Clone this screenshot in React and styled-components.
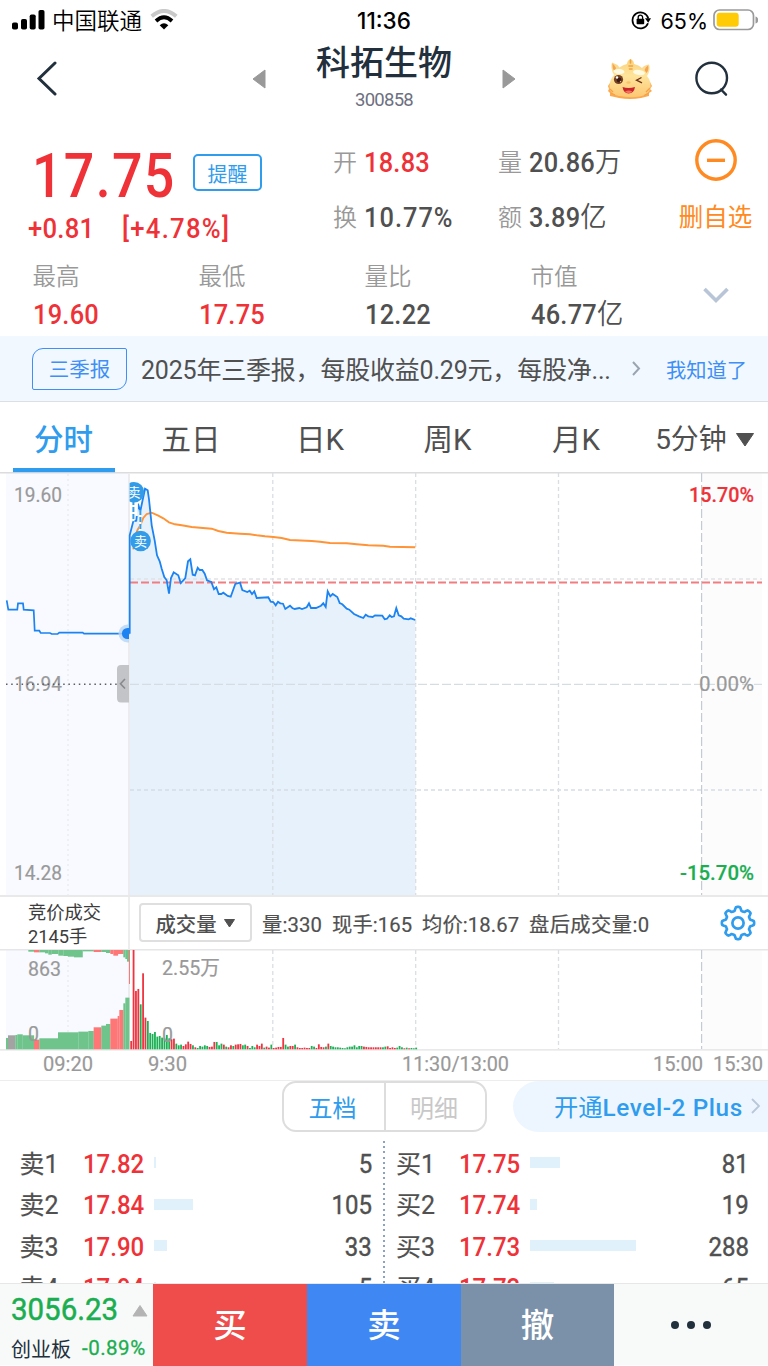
import React from 'react';
import styled, { createGlobalStyle } from 'styled-components';

const colors = {
  red: '#ee3238',
  green: '#1aae50',
  blue: '#2f9ced',
  link: '#3f8ff5',
  text: '#505050',
  muted: '#999999',
  dark: '#22303d',
  orange: '#ff8a22',
};

const GlobalStyle = createGlobalStyle`
  * {
    box-sizing: border-box;
  }
  body {
    margin: 0;
    background: #fff;
    font-family: Roboto, "Noto Sans CJK SC", sans-serif;
    color: ${colors.text};
  }
`;

const Page = styled.div`
  width: 768px;
  height: 1366px;
  overflow: hidden;
  display: flex;
  flex-direction: column;
  background: #fff;
`;

/* status bar */

const StatusBar = styled.div`
  height: 40px;
  flex: none;
  display: grid;
  grid-template-columns: 1fr auto 1fr;
  align-items: center;
  padding: 0 9px 5px 12px;
  color: #000;
  font-family: Inter, "Noto Sans CJK SC", sans-serif;
  font-size: 22px;
  line-height: 36px;
`;

const StatusGroup = styled.div`
  display: flex;
  align-items: center;
  justify-content: ${({ $end }) => ($end ? 'flex-end' : 'flex-start')};
`;

const Carrier = styled.span`
  font-size: 22.5px;
  font-weight: 350;
  margin: 2px 8px 0 7px;
`;

const Clock = styled.span`
  font-weight: 500;
  font-size: 22.5px;
  margin: 3px 3px 0 0;
`;

const Percent = styled.span`
  font-size: 21.5px;
  margin: 3px 5px 0 9px;
`;

/* header */

const Header = styled.header`
  height: 90px;
  flex: none;
  display: flex;
  align-items: flex-start;
  color: ${colors.dark};
`;

const HeaderSide = styled.div`
  width: ${({ $width }) => $width}px;
  height: 77px;
  display: flex;
  align-items: center;
  padding-left: ${({ $pad }) => $pad}px;
  gap: ${({ $gap }) => $gap || 0}px;
`;

const TitleBlock = styled.div`
  width: 236px;
  text-align: center;
`;

const Title = styled.h1`
  margin: 0;
  padding-top: 1px;
  font-size: 34px;
  font-weight: 500;
  line-height: 44px;
`;

const Code = styled.div`
  margin-top: 4px;
  font-size: 18.5px;
  line-height: 22px;
  letter-spacing: -0.04em;
  color: #6d7080;
`;

/* quote */

const Quote = styled.section`
  height: 206px;
  flex: none;
`;

const QuoteTop = styled.div`
  display: grid;
  grid-template-columns: 333px 165px 168px 1fr;
  height: 130px;
`;

const PriceLine = styled.div`
  height: 72px;
  padding: 10px 0 0 32px;
  display: flex;
  align-items: flex-start;
`;

const Price = styled.div`
  width: 161px;
  font-size: 61px;
  font-weight: 500;
  line-height: 73px;
  letter-spacing: 0.025em;
  transform: scaleX(0.88);
  transform-origin: left;
  color: ${colors.red};
`;

const Remind = styled.button`
  width: 69px;
  height: 37px;
  flex: none;
  margin: 14px 0 0;
  padding: 4px 0 0;
  border: 2px solid ${colors.blue};
  border-radius: 5px;
  background: #fff;
  color: ${colors.blue};
  font-family: inherit;
  font-size: 20px;
  line-height: 30px;
`;

const ChangeLine = styled.div`
  display: flex;
  gap: 24px;
  padding: 10px 0 0 28px;
  font-size: 27px;
  font-weight: 500;
  line-height: 34px;
  letter-spacing: 0.01em;
  color: ${colors.red};

  span {
    transform: scaleX(0.95);
    transform-origin: left;
  }
  span:last-child {
    letter-spacing: 0.05em;
  }
`;

const PairColumn = styled.div`
  display: flex;
  flex-direction: column;
  gap: 19px;
  padding-top: 15px;
`;

const Pair = styled.div`
  display: flex;
  gap: 7px;
  font-size: 27px;
  line-height: 36px;
  white-space: nowrap;
`;

const Label = styled.span`
  font-size: 24px;
  font-weight: 350;
  color: ${colors.muted};
`;

// figures are set a little condensed
const Value = styled.span`
  letter-spacing: ${({ $wide }) => ($wide ? 0.04 : 0.01)}em;
  font-weight: 500;
  transform: scaleX(0.94);
  transform-origin: left;
  color: ${({ $up }) => ($up ? colors.red : colors.text)};
`;

const Unit = styled.span`
  font-weight: 350;
  font-size: 28px;
  line-height: 1;
`;

const Remove = styled.div`
  display: flex;
  flex-direction: column;
  align-items: center;
  padding: 9px 3px 0 0;
  color: ${colors.orange};
  font-size: 24.5px;
  line-height: 34px;

  span {
    margin-top: 20px;
  }
`;

const Stats = styled.div`
  display: grid;
  grid-template-columns: 166px 166px 166px 172px 1fr;
  padding-left: 32.5px;
`;

const Stat = styled.div`
  display: flex;
  flex-direction: column;
  font-size: 27px;
  line-height: 40px;

  ${Label} {
    line-height: 35px;
    font-size: 23.5px;
  }
`;

const Expand = styled.div`
  padding-top: 27px;
`;

/* report notice */

const Notice = styled.div`
  height: 66px;
  flex: none;
  display: flex;
  align-items: center;
  padding: 0 0 0 32px;
  background: #f1f8ff;
  border-bottom: 1px solid #dcdfe3;
`;

const NoticeTag = styled.div`
  width: 95px;
  height: 42px;
  flex: none;
  border: 1px solid ${colors.link};
  border-radius: 11px 2px 11px 2px;
  color: ${colors.link};
  font-size: 20.5px;
  line-height: 43px;
  text-align: center;
`;

const NoticeText = styled.div`
  width: 489px;
  flex: none;
  margin: 4px 0 0 14px;
  font-size: 25px;
  line-height: 36px;
  letter-spacing: -0.2px;
  white-space: nowrap;
`;

const NoticeDismiss = styled.div`
  margin-left: 24px;
  color: ${colors.link};
  font-size: 20.3px;
  white-space: nowrap;
`;

/* period tabs */

const Tabs = styled.nav`
  height: 70px;
  flex: none;
  display: grid;
  grid-template-columns: 127px 128px 130px 125px 132px 126px;
`;

const Tab = styled.div`
  display: flex;
  justify-content: center;
  align-items: center;
  gap: 8px;
  padding-top: 5px;
  font-size: ${({ $small }) => ($small ? 28 : 29.5)}px;
  line-height: 40px;
  font-weight: ${({ $active }) => ($active ? 500 : 400)};
  color: ${({ $active }) => ($active ? colors.blue : colors.text)};
  background: ${({ $active }) =>
    $active ? `linear-gradient(${colors.blue}, ${colors.blue}) 13px 66px / 102px 4px no-repeat` : 'none'};
`;

const Chart = styled.svg`
  display: block;
  flex: none;
  font-family: Roboto, "Noto Sans CJK SC", sans-serif;
`;

/* volume toolbar */

const Indicator = styled.div`
  height: 53px;
  flex: none;
  display: flex;
  border-top: 2px solid #e9e9ea;
`;

const Auction = styled.div`
  width: 130px;
  padding: 4px 0 0 28px;
  border-right: 2px solid #ededee;
  font-size: 18.3px;
  line-height: 24px;
  color: #3c3c3c;
  white-space: nowrap;
`;

const IndicatorSelect = styled.div`
  width: 113px;
  height: 39px;
  margin: 6px 0 0 9px;
  border: 2px solid #dfdfdf;
  border-radius: 4px;
  display: flex;
  align-items: center;
  justify-content: center;
  gap: 6px;
  font-size: 20.4px;
  font-weight: 500;
`;

const Readings = styled.div`
  display: flex;
  width: 468px;
  padding: 13px 0 0 10px;
  font-size: 20.3px;
  line-height: 30px;
  white-space: nowrap;
`;

const Reading = styled.span`
  width: ${({ $width }) => $width}px;
  letter-spacing: 0.1px;
  -webkit-text-stroke: 0.2px ${colors.text};

  &:last-child {
    letter-spacing: 0.4px;
  }
`;

const Settings = styled.div`
  padding-top: 8px;
`;

/* order book */

const Depth = styled.section`
  height: 203px;
  flex: none;
  overflow: hidden;
  border-top: 1px solid #ededee;
`;

const DepthHeader = styled.div`
  display: flex;
  height: 51px;
  padding-left: 282px;
`;

const Switch = styled.div`
  width: 205px;
  display: flex;
  border: 2px solid #dddddd;
  border-radius: 14px;
`;

const SwitchItem = styled.div`
  flex: ${({ $active }) => ($active ? '0 0 100px' : 1)};
  padding-right: 3px;
  text-align: center;
  font-size: 24px;
  line-height: 52px;
  color: ${({ $active }) => ($active ? colors.blue : '#c8c8c8')};

  & + & {
    border-left: 2px solid #dddddd;
  }
`;

const LevelTwo = styled.div`
  flex: 1;
  display: flex;
  align-items: center;
  gap: 8px;
  margin-left: 26px;
  padding: 0 0 2px 41px;
  border-radius: 26px 0 0 26px;
  background: #edf6ff;
  color: ${colors.blue};
  font-size: 24.3px;
  white-space: nowrap;

  b {
    font-weight: 500;
    letter-spacing: 0.025em;
  }
`;

const Book = styled.div`
  display: grid;
  grid-template-columns: 383px 2px 383px;
  padding-top: 11.5px;
`;

const BookDivider = styled.div`
  margin-top: -3px;
  background: repeating-linear-gradient(#8ba3bf 0 2px, #fff 2px 5.2px);
`;

const Side = styled.div`
  padding: ${({ $right }) => ($right ? '0 19px 0 11px' : '0 11px 0 19.5px')};
`;

const Order = styled.div`
  display: grid;
  grid-template-columns: ${({ $right }) => ($right ? '63px 71px' : '63px 71.5px')} 1fr auto;
  height: 41.5px;
  line-height: 41.5px;
  font-size: 25.5px;

  ${Value} {
    letter-spacing: 0;
  }
`;

const OrderName = styled.span`
  font-size: 25px;
  white-space: nowrap;
  -webkit-text-stroke: 0.2px ${colors.text};
`;

const Amount = styled.span`
  transform: scaleX(0.94);
  transform-origin: right;
  -webkit-text-stroke: 0.4px ${colors.text};
`;

const VolumeBar = styled.span`
  height: 11px;
  margin-top: 13.5px;
  background: #e0f1fc;
`;

/* bottom bar */

const Footer = styled.footer`
  height: 83px;
  flex: none;
  display: grid;
  grid-template-columns: 153px 154px 154px 153px 1fr;
  background: #f8faf9;
  border-top: 1px solid #e6e8e8;
  border-bottom: 1px solid #fff;
`;

const Index = styled.div`
  padding: 7px 0 0 11px;
`;

const IndexRow = styled.div`
  display: flex;
  align-items: center;
  white-space: nowrap;
  color: ${colors.green};
  height: 38px;
`;

const IndexValue = styled.span`
  width: 121px;
  font-size: 31px;
  line-height: 38px;
  transform: scaleX(0.95);
  transform-origin: left;
  -webkit-text-stroke: 0.5px ${colors.green};
`;

const IndexName = styled.span`
  width: 71px;
  font-size: 20px;
  color: ${colors.dark};
`;

const IndexChange = styled.span`
  font-size: 20.5px;
  letter-spacing: 0.5px;
  -webkit-text-stroke: 0.3px ${colors.green};
`;

const Trade = styled.button`
  border: 0;
  margin: 0;
  padding: 0 0 6px;
  background: ${({ $color }) => $color};
  color: #fff;
  font-family: inherit;
  font-size: 33.5px;
  font-weight: 500;
`;

const More = styled.div`
  display: flex;
  align-items: center;
  justify-content: center;
  padding-bottom: 1px;
  gap: 8px;

  i {
    width: 8px;
    height: 8px;
    border-radius: 50%;
    background: ${colors.dark};
  }
`;

// chart series are kept in 3x device pixels
const toPoints = (series) => series.map(([x, y]) => `${(x / 3).toFixed(1)},${(y / 3).toFixed(1)}`).join(' ');

const auctionLine = [
  [20, 385], [25, 413], [52, 413], [54, 394], [69, 394], [71, 413], [101, 415], [104, 476], [118, 476],
  [122, 483], [150, 483], [155, 486], [173, 486], [178, 482], [248, 482], [252, 485], [388, 485],
];

const priceLine = [
  [389, 485], [389, 190], [400, 148], [409, 146], [414, 95], [421, 118], [435, 50], [443, 55], [447, 82],
  [455, 160], [464, 206], [471, 250], [479, 268], [485, 290], [493, 315], [500, 325], [507, 365], [513, 318],
  [521, 301], [535, 310], [542, 333], [550, 325], [556, 318], [564, 268], [571, 262], [578, 308], [585, 310],
  [593, 287], [599, 294], [607, 294], [614, 305], [621, 325], [634, 330], [642, 352], [649, 346], [656, 366],
  [664, 366], [670, 362], [683, 372], [692, 374], [706, 336], [720, 332], [727, 354], [742, 360], [749, 356],
  [756, 366], [763, 358], [770, 378], [805, 376], [812, 389], [820, 390], [827, 400], [834, 389], [841, 394],
  [849, 395], [856, 411], [870, 401], [877, 408], [884, 411], [898, 408], [906, 411], [920, 406], [927, 394],
  [933, 408], [948, 408], [963, 401], [970, 394], [977, 405], [983, 358], [991, 373], [998, 366], [1012, 375],
  [1019, 393], [1027, 397], [1040, 410], [1048, 413], [1062, 426], [1077, 433], [1090, 438], [1097, 428],
  [1105, 433], [1118, 435], [1125, 430], [1147, 431], [1154, 442], [1161, 440], [1169, 430], [1175, 435],
  [1182, 433], [1189, 408], [1196, 430], [1204, 433], [1211, 440], [1226, 442], [1232, 439], [1246, 444],
];

const averageLine = [
  [400, 232], [404, 198], [412, 175], [421, 160], [430, 138], [440, 126], [455, 122], [475, 131], [490, 139],
  [507, 151], [525, 157], [545, 160], [575, 165], [600, 167], [635, 170], [655, 177], [680, 182], [720, 185],
  [750, 187], [770, 190], [795, 193], [820, 195], [845, 198], [870, 204], [935, 207], [960, 209], [990, 213],
  [1040, 214], [1070, 217], [1105, 220], [1150, 221], [1170, 224], [1246, 226],
];

// [from, to, height, colour]
const auctionTop = [
  [85, 102, 5, 'g'], [102, 118, 7, 'r'], [118, 135, 7, 'g'], [135, 145, 10, 'g'], [145, 155, 14, 'g'],
  [155, 175, 12, 'g'], [175, 190, 17, 'g'], [190, 204, 18, 'g'], [204, 222, 20, 'g'], [222, 248, 22, 'g'],
  [248, 281, 4, 'g'], [281, 304, 6, 'r'], [304, 318, 6, 'g'], [318, 331, 9, 'g'], [331, 340, 12, 'r'],
  [340, 354, 17, 'r'], [354, 370, 12, 'r'], [370, 376, 22, 'g'], [376, 381, 27, 'g'], [381, 388, 35, 'g'],
];

const auctionBottom = [
  [18, 24, 34, 'g'], [24, 46, 42, 'x'], [46, 52, 43, 'g'], [52, 68, 45, 'g'], [68, 102, 42, 'g'],
  [102, 118, 29, 'r'], [118, 174, 33, 'g'], [174, 235, 51, 'g'], [235, 265, 53, 'g'], [265, 281, 55, 'g'],
  [281, 304, 66, 'r'], [304, 318, 71, 'g'], [318, 331, 76, 'g'], [331, 353, 92, 'r'], [353, 358, 100, 'r'],
  [358, 370, 118, 'r'], [370, 376, 138, 'g'], [376, 388, 155, 'g'],
];

const barFill = { g: '#6ec48a', r: '#ff7676', x: '#a3a3a3' };

const volumes = [
  25, 298, 175, 181, 135, 228, 95, 85, 49, 46, 52, 38, 40, 35, 33, 43, 33, 30, 32, 17, 12, 14, 10, 15, 23, 16, 12, 6,
  4, 10, 8, 12, 10, 7, 8, 22, 22, 12, 17, 14, 8, 6, 12, 10, 14, 15, 16, 12, 14, 10, 4, 10, 6, 14, 10, 17, 5, 8, 5, 14,
  4, 5, 7, 7, 34, 14, 8, 10, 10, 14, 6, 4, 4, 5, 4, 4, 10, 8, 4, 15, 7, 6, 8, 17, 10, 8, 6, 6, 5, 4, 3, 6, 8, 8, 12,
  6, 10, 10, 8, 7, 6, 6, 6, 6, 6, 6, 6, 8, 9, 4, 6, 4, 5, 10, 6, 3, 5, 3, 4, 3, 5,
];
const volumeSides =
  'rrrrgrrggggggggggrrgggrrrrgrgggggrrrgggrgrrgrrrggrgggrrrgrrgrrrrrggrrgrrrrrrggrrrrgrggggggggggggggrrrrrrrrggrrrrgggrgrg';

const dash = { stroke: '#dfe2e5', strokeWidth: 1.3, strokeDasharray: '4 3' };

const ChartText = ({ x, y, w, fill = colors.muted, size = 20.5, bold, children }) => (
  <text
    x={x}
    y={y}
    fill={fill}
    fontSize={size}
    fontWeight={bold ? 500 : 400}
    textLength={w}
    lengthAdjust="spacingAndGlyphs"
    stroke={fill}
    strokeWidth=".2"
  >
    {children}
  </text>
);

const SellPin = ({ x, y }) => (
  <g>
    <circle cx={x} cy={y} r="10.3" fill="#329ce8" />
    <text x={x} y={y + 5} fontSize="13" fill="#fff" textAnchor="middle">
      卖
    </text>
  </g>
);

const PriceChart = () => (
  <Chart width="768" height="423" viewBox="0 0 768 423">
    <clipPath id="session">
      <rect x="129.6" y="0" width="640" height="423" />
    </clipPath>
    <clipPath id="preopen">
      <rect x="0" y="0" width="129" height="423" />
    </clipPath>
    <rect x="6" y="0" width="123" height="423" fill="#f8faff" />
    <rect x="702" y="0" width="60" height="423" fill="#fcfcfd" />
    <polygon points={`${toPoints(priceLine)} 415.5,423 129.7,423`} fill="#e6f1fc" />
    <path d="M0 .75H768" stroke="#dcdcdd" strokeWidth="1.5" />
    <path d="M13 0H115" stroke="#9fd0f6" strokeWidth="1" />
    <path d="M68 2V423" stroke="#e4e6ea" strokeDasharray="2 3" />
    <path d="M272.8 1V423M415.7 1V423M558.5 1V423" {...dash} stroke="#d9dee2" />
    <path d="M701.6 1V423" stroke="#c3ccd4" strokeWidth="1.2" strokeDasharray="9 3" />
    <path d="M130 107H762" {...dash} />
    <path d="M130 212.3H762" stroke="#d5dde3" strokeWidth="1.2" strokeDasharray="9 3" />
    <path d="M130 318H762" {...dash} stroke="#d5dde3" />
    <path d="M130 110.5H762" stroke="#f27d80" strokeWidth="1.8" strokeDasharray="8 3" />
    <path d="M129 1V423" stroke="#ececee" strokeWidth="2" />

    <ChartText x="14" y="30" w="48">19.60</ChartText>
    <ChartText x="14" y="219" w="48">16.94</ChartText>
    <ChartText x="14" y="408" w="48">14.28</ChartText>
    <path d="M6 212.3H122" stroke="#5c5c66" strokeWidth="1.5" strokeDasharray="1.5 3.7" />

    <polyline points={toPoints(averageLine)} fill="none" stroke="#ff9336" strokeWidth="1.9" />
    <polyline points={toPoints(priceLine)} fill="none" stroke="#1b83f2" strokeWidth="1.8" />
    <polyline points={toPoints(auctionLine)} fill="none" stroke="#1b83f2" strokeWidth="1.7" />
    <g clipPath="url(#session)">
      <path d="M133.4 28V50M136.8 28V44M140.4 38V60" stroke="#fff" strokeWidth="2.2" />
      <path d="M133.4 28V50M140.4 38V60" stroke="#329ce8" strokeWidth="2" strokeDasharray="5 2" />
      <SellPin x={134} y={20.3} />
      <SellPin x={140.6} y={69} />
    </g>
    <g clipPath="url(#preopen)">
      <circle cx="127.5" cy="161.5" r="9" fill="#b5d4f6" opacity=".8" />
      <circle cx="127.5" cy="161.5" r="5.6" fill="#1b83f2" />
    </g>
    <path d="M129 193H121Q117 193 117 197V226Q117 230.6 121 230.6H129Z" fill="#c3c4c7" />
    <path d="M125 207L120.5 211.7L125 216.5" fill="none" stroke="#88898c" strokeWidth="1.6" />

    <ChartText x="689" y="30" w="65" fill={colors.red} bold>15.70%</ChartText>
    <ChartText x="699" y="219" w="55">0.00%</ChartText>
    <ChartText x="680" y="408" w="74" fill={colors.green} bold>-15.70%</ChartText>
  </Chart>
);

const VolumeChart = () => (
  <Chart width="768" height="132" viewBox="0 0 768 132">
    <rect x="6" y="2" width="123" height="99.5" fill="#f8faff" />
    <rect x="702" y="2" width="60" height="99.5" fill="#fcfcfd" />
    <path d="M0 1.8H768" stroke="#e6e6e8" strokeWidth="1.5" />
    <path d="M68 2V101" stroke="#e4e6ea" strokeDasharray="2 3" />
    <path d="M272.8 2V101M415.7 2V101M558.5 2V101" {...dash} stroke="#dadfe3" />
    <path d="M701.6 2V101" stroke="#c3ccd4" strokeWidth="1.2" strokeDasharray="9 3" />
    <path d="M129 0V101" stroke="#ececee" strokeWidth="2" />
    <path d="M0 101.8H768" stroke="#e2e2e4" strokeWidth="1.2" />
    {auctionTop.map(([from, to, h, c]) => (
      <rect key={from} x={from / 3} y="2" width={(to - from) / 3 + 0.1} height={h / 3} fill={barFill[c]} />
    ))}
    {auctionBottom.map(([from, to, h, c]) => (
      <rect key={from} x={from / 3} y={101.3 - h / 3} width={(to - from) / 3 + 0.1} height={h / 3} fill={barFill[c]} />
    ))}
    <path d="M129.5 2V36" stroke="#ff7676" strokeWidth="1" />
    {volumes.map((h, i) => (
      <rect
        key={i}
        x={130.3 + i * 2.375}
        y={101.3 - h / 3}
        width="1.8"
        height={h / 3}
        fill={volumeSides[i] === 'r' ? '#ef3340' : '#1cb055'}
      />
    ))}
    <ChartText x="28" y="28" w="33">863</ChartText>
    <ChartText x="28" y="93" w="11">0</ChartText>
    <ChartText x="162" y="27" w="58">2.55万</ChartText>
    <ChartText x="162" y="94" w="11">0</ChartText>
    <ChartText x="43" y="123" w="50">09:20</ChartText>
    <ChartText x="148" y="123" w="39">9:30</ChartText>
    <ChartText x="402" y="123" w="107">11:30/13:00</ChartText>
    <ChartText x="653" y="123" w="50">15:00</ChartText>
    <ChartText x="713" y="123" w="50">15:30</ChartText>
  </Chart>
);

const SignalIcon = () => (
  <svg width="33" height="21" viewBox="0 0 33 21">
    <rect x="0" y="13.5" width="6" height="7" rx="1.8" />
    <rect x="9" y="10" width="6" height="10.5" rx="1.8" />
    <rect x="17.7" y="5.5" width="6" height="15" rx="1.8" />
    <rect x="26.5" y="1" width="6" height="19.5" rx="1.8" />
  </svg>
);

const WifiIcon = () => (
  <svg width="28" height="21" viewBox="0 0 28 21">
    <path d="M1.7 7.3Q14 -3.5 26.3 7.3" fill="none" stroke="#c9c9c9" strokeWidth="3.8" />
    <path d="M6 12Q14 4.5 22 12" fill="none" stroke="#000" strokeWidth="3.8" />
    <path d="M14 20.5L9.7 16.2Q14 12.5 18.3 16.2Z" />
  </svg>
);

const LockIcon = () => (
  <svg width="20" height="20" viewBox="0 0 20 20">
    <path d="M17 13.2A8 8 0 1 1 17.3 8.5" fill="none" stroke="#000" strokeWidth="1.7" />
    <path d="M14 8.2H20L17.2 12.8Z" />
    <rect x="5.6" y="8.8" width="7.6" height="5.5" rx=".8" />
    <path d="M7.2 9V7.3A2.2 2.2 0 0 1 11.6 7.3V9" fill="none" stroke="#000" strokeWidth="1.3" />
  </svg>
);

const BatteryIcon = () => (
  <svg width="46" height="22" viewBox="0 0 46 22">
    <rect x="1" y="1" width="39.5" height="19.5" rx="5.5" fill="#fff" stroke="#9a9a9a" strokeWidth="1.7" />
    <rect x="3.7" y="3.7" width="22" height="14" rx="3" fill="#fecb06" />
    <path d="M42.5 7.5Q45.5 8.5 45 11Q45.5 13.5 42.5 14.5Z" fill="#9a9a9a" />
  </svg>
);

const DragonIcon = () => (
  <svg width="46" height="42" viewBox="0 0 46 42">
    <defs>
      <linearGradient id="face" x1="0" y1="0" x2="0" y2="1">
        <stop offset="0" stopColor="#fbd27e" />
        <stop offset=".45" stopColor="#fee49b" />
        <stop offset="1" stopColor="#fdc873" />
      </linearGradient>
    </defs>
    <path
      d="M3 25L1 28L2 31L1 33L3 35L3 38Q8 39 12 40Q23 42 34 40L42 38L42 35L45 33L43 31L45 28L43 24Z"
      fill="#fba94c"
    />
    <path
      d="M7 17Q3 10 5 4.5Q10 6 12.5 9.5Q16 6.5 20 6Q20 2.5 23.5 1Q27 2.5 27 6Q32 7 35 10Q37 7 42 6.5Q44 12 40 18Q44 23 43.5 29Q42 37 33 38.5Q23 40 12 38Q2 36 2.5 28Q3 21 7 17Z"
      fill="url(#face)"
    />
    <path d="M5.5 5.5Q5 10 7.5 14L9 10Q7.5 7 5.5 5.5ZM41 7.5Q42 12 39.5 15L37.5 12Q38.5 9 41 7.5Z" fill="#f4a452" />
    <path d="M23.5 2V5M22 8H25.5M22.5 11H25" stroke="#eda342" strokeWidth="1.6" strokeLinecap="round" />
    <ellipse cx="12" cy="13.5" rx="5.5" ry="2.6" fill="#fffbe3" transform="rotate(4 12 13.5)" />
    <ellipse cx="32" cy="14.5" rx="6" ry="2.6" fill="#fffbe3" transform="rotate(8 32 14.5)" />
    <circle cx="11.5" cy="21.5" r="4.6" fill="#764326" />
    <circle cx="12" cy="22" r="2.4" fill="#3b1a12" />
    <circle cx="10" cy="19.5" r="1.2" fill="#fff" />
    <circle cx="13.5" cy="23.5" r=".7" fill="#e9b287" />
    <path d="M34.5 19.5L29.5 22.2L35 24.8" fill="none" stroke="#6e351e" strokeWidth="1.3" />
    <ellipse cx="21.5" cy="24.5" rx="2.2" ry="1.3" fill="#f8c36b" />
    <path d="M15.500 29Q21.5 31 28 29Q27 35.5 21.5 35.5Q16.5 35 15.500 29Z" fill="#c9242a" />
    <path d="M18 33.5Q21.5 31.5 25.5 33.5Q21.5 37 18 33.5Z" fill="#f4705f" />
    <path d="M3 31L6 34M4 35L8 37M43 30L39 34M42 35L37 37.5" stroke="#f6a146" strokeWidth="1.2" />
  </svg>
);

const SearchIcon = () => (
  <svg width="34" height="36" viewBox="0 0 34 36" fill="none" stroke={colors.dark} strokeWidth="2.4">
    <circle cx="16.7" cy="17" r="15.3" />
    <path d="M26 28.5L31 33.7" strokeLinecap="round" />
  </svg>
);

const GearIcon = () => {
  const points = [];
  for (let i = 0; i < 96; i += 1) {
    const angle = (i / 96) * Math.PI * 2;
    const wave = Math.max(-1, Math.min(1, Math.cos(angle * 8) * 1.7));
    const r = 14.3 + wave * 1.8;
    points.push(`${(18 + r * Math.sin(angle)).toFixed(2)},${(18 - r * Math.cos(angle)).toFixed(2)}`);
  }
  return (
    <svg width="36" height="36" viewBox="0 0 36 36" fill="none" stroke={colors.blue} strokeWidth="2.7">
      <polygon points={points.join(' ')} strokeLinejoin="round" />
      <circle cx="18" cy="18" r="5.6" />
    </svg>
  );
};

const Triangle = ({ d, w, h, fill }) => (
  <svg width={w} height={h} viewBox={`0 0 ${w} ${h}`}>
    <path d={d} fill={fill} stroke={fill} strokeLinejoin="round" />
  </svg>
);

const sells = [
  ['卖1', '17.82', 2, '5'],
  ['卖2', '17.84', 39, '105'],
  ['卖3', '17.90', 12.5, '33'],
  ['卖4', '17.94', 2, '5'],
];
const buys = [
  ['买1', '17.75', 30, '81'],
  ['买2', '17.74', 7, '19'],
  ['买3', '17.73', 106, '288'],
  ['买4', '17.72', 24, '65'],
];

const Orders = ({ rows, right }) => (
  <Side $right={right}>
    {rows.map(([name, price, width, amount]) => (
      <Order key={name} $right={right}>
        <OrderName>{name}</OrderName>
        <Value $up>{price}</Value>
        <VolumeBar style={{ width }} />
        <Amount>{amount}</Amount>
      </Order>
    ))}
  </Side>
);

const App = () => (
  <Page>
    <GlobalStyle />
    <StatusBar>
      <StatusGroup>
        <SignalIcon />
        <Carrier>中国联通</Carrier>
        <WifiIcon />
      </StatusGroup>
      <Clock>11:36</Clock>
      <StatusGroup $end>
        <LockIcon />
        <Percent>65%</Percent>
        <BatteryIcon />
      </StatusGroup>
    </StatusBar>

    <Header>
      <HeaderSide $width={266} $pad={36} $gap={195}>
        <svg width="21" height="35" viewBox="0 0 21 35">
          <path d="M19 2L3 17.5L19 33" fill="none" stroke={colors.dark} strokeWidth="3" strokeLinecap="round" />
        </svg>
        <Triangle w={14} h={20} d="M13 1V19L1 10Z" fill="#999" />
      </HeaderSide>
      <TitleBlock>
        <Title>科拓生物</Title>
        <Code>300858</Code>
      </TitleBlock>
      <HeaderSide $width={105} $pad={0}>
        <Triangle w={14} h={20} d="M1 1V19L13 10Z" fill="#999" />
      </HeaderSide>
      <HeaderSide $width={161} $pad={0} $gap={42}>
        <DragonIcon />
        <SearchIcon />
      </HeaderSide>
    </Header>

    <Quote>
      <QuoteTop>
        <div>
          <PriceLine>
            <Price>17.75</Price>
            <Remind>提醒</Remind>
          </PriceLine>
          <ChangeLine>
            <span>+0.81</span>
            <span>[+4.78%]</span>
          </ChangeLine>
        </div>
        <PairColumn>
          <Pair>
            <Label>开</Label>
            <Value $up>18.83</Value>
          </Pair>
          <Pair>
            <Label>换</Label>
            <Value $wide>10.77%</Value>
          </Pair>
        </PairColumn>
        <PairColumn>
          <Pair>
            <Label>量</Label>
            <Value>20.86<Unit>万</Unit></Value>
          </Pair>
          <Pair>
            <Label>额</Label>
            <Value>3.89<Unit>亿</Unit></Value>
          </Pair>
        </PairColumn>
        <Remove>
          <svg width="42" height="42" viewBox="0 0 42 42" fill="none" stroke={colors.orange} strokeWidth="3.4">
            <circle cx="21" cy="21" r="19.2" />
            <path d="M12 21.3H30" />
          </svg>
          <span>删自选</span>
        </Remove>
      </QuoteTop>
      <Stats>
        <Stat>
          <Label>最高</Label>
          <Value $up>19.60</Value>
        </Stat>
        <Stat>
          <Label>最低</Label>
          <Value $up>17.75</Value>
        </Stat>
        <Stat>
          <Label>量比</Label>
          <Value>12.22</Value>
        </Stat>
        <Stat>
          <Label>市值</Label>
          <Value>46.77<Unit>亿</Unit></Value>
        </Stat>
        <Expand>
          <svg width="26" height="17" viewBox="0 0 26 17">
            <path d="M1.5 2L13 13.5L24.5 2" fill="none" stroke="#b8c5d6" strokeWidth="3.6" />
          </svg>
        </Expand>
      </Stats>
    </Quote>

    <Notice>
      <NoticeTag>三季报</NoticeTag>
      <NoticeText>2025年三季报，每股收益0.29元，每股净...</NoticeText>
      <svg width="12" height="16" viewBox="0 0 12 16">
        <path d="M3 1L9 7.5L3 14" fill="none" stroke="#9aa5b1" strokeWidth="2" />
      </svg>
      <NoticeDismiss>我知道了</NoticeDismiss>
    </Notice>

    <Tabs>
      <Tab $active>分时</Tab>
      <Tab>五日</Tab>
      <Tab>日K</Tab>
      <Tab>周K</Tab>
      <Tab>月K</Tab>
      <Tab $small>
        5分钟
        <Triangle w={20} h={16} d="M1.5 1.5H18.5L10 14Z" fill={colors.text} />
      </Tab>
    </Tabs>

    <PriceChart />

    <Indicator>
      <Auction>
        <div>竞价成交</div>
        <div>2145手</div>
      </Auction>
      <IndicatorSelect>
        成交量
        <Triangle w={13} h={10} d="M1.5 1.5H11.5L6.5 9Z" fill={colors.text} />
      </IndicatorSelect>
      <Readings>
        <Reading $width={70}>量:330</Reading>
        <Reading $width={90}>现手:165</Reading>
        <Reading $width={107}>均价:18.67</Reading>
        <Reading $width={125}>盘后成交量:0</Reading>
      </Readings>
      <Settings>
        <GearIcon />
      </Settings>
    </Indicator>

    <VolumeChart />

    <Depth>
      <DepthHeader>
        <Switch>
          <SwitchItem $active>五档</SwitchItem>
          <SwitchItem>明细</SwitchItem>
        </Switch>
        <LevelTwo>
          <span>开通<b>Level-2 Plus</b></span>
          <svg width="10" height="18" viewBox="0 0 10 18">
            <path d="M1 2L8 9L1 16" fill="none" stroke="#b9c8d8" strokeWidth="1.8" />
          </svg>
        </LevelTwo>
      </DepthHeader>
      <Book>
        <Orders rows={sells} />
        <BookDivider />
        <Orders rows={buys} right />
      </Book>
    </Depth>

    <Footer>
      <Index>
        <IndexRow>
          <IndexValue>3056.23</IndexValue>
          <Triangle w={16} h={13} d="M1 12H15L8 1.5Z" fill="#b4b4b4" />
        </IndexRow>
        <IndexRow>
          <IndexName>创业板</IndexName>
          <IndexChange>-0.89%</IndexChange>
        </IndexRow>
      </Index>
      <Trade $color="#ee4d4c">买</Trade>
      <Trade $color="#3f87f3">卖</Trade>
      <Trade $color="#7b91a9">撤</Trade>
      <More>
        <i />
        <i />
        <i />
      </More>
    </Footer>
  </Page>
);

export default App;
